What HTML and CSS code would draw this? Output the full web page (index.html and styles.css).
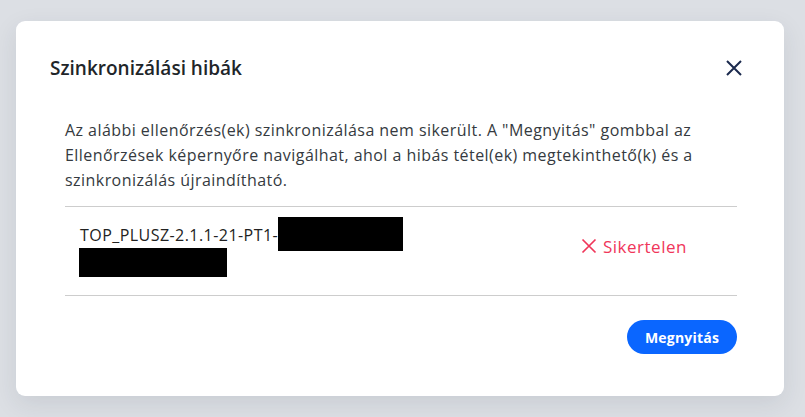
FILE: index.html
```html
<!DOCTYPE html>
<html lang="hu">
<head>
<meta charset="utf-8">
<title>Szinkronizálási hibák</title>
<link rel="stylesheet" href="styles.css">
</head>
<body>
<div class="modal">
  <div class="modal-header">
    <h2 class="modal-title">Szinkronizálási hibák</h2>
    <button class="close-btn" aria-label="Bezárás">
      <svg width="16" height="16" viewBox="0 0 16 16"><path d="M1 1 L15 15 M15 1 L1 15" stroke="#1b2a4e" stroke-width="2" fill="none"/></svg>
    </button>
  </div>
  <div class="modal-body">
    <p class="intro">Az alábbi ellenőrzés(ek) szinkronizálása nem sikerült. A "Megnyitás" gombbal az Ellenőrzések képernyőre navigálhat, ahol a hibás tétel(ek) megtekinthető(k) és a szinkronizálás újraindítható.</p>
    <div class="list">
      <div class="row">
        <div class="row-name">TOP_PLUSZ-2.1.1-21-PT1-<span class="redact redact-a"></span><span class="redact redact-b"></span></div>
        <div class="row-status">
          <svg width="16" height="16" viewBox="0 0 16 16"><path d="M1.5 1.5 L14.5 14.5 M14.5 1.5 L1.5 14.5" stroke="#f0365a" stroke-width="1.7" fill="none"/></svg>
          <span>Sikertelen</span>
        </div>
      </div>
    </div>
    <div class="actions">
      <button class="btn-primary">Megnyitás</button>
    </div>
  </div>
</div>
</body>
</html>
```

FILE: styles.css
```css
html, body {
  margin: 0;
  padding: 0;
}
body {
  background: #dcdfe4;
  font-family: "Open Sans", "Liberation Sans", sans-serif;
  width: 805px;
  height: 417px;
  overflow: hidden;
  padding: 21px 21px 0 16px;
  box-sizing: border-box;
}
.modal {
  background: #fff;
  border-radius: 9px;
  width: 768px;
  height: 375px;
  box-sizing: border-box;
  padding: 33px 0 0 0;
  box-shadow: 0 8px 24px rgba(40, 50, 70, 0.10);
}
.modal-header {
  display: flex;
  justify-content: space-between;
  align-items: center;
  padding: 0 42px 0 34px;
  height: 28px;
}
.modal-title {
  margin: 0;
  font-size: 19px;
  font-weight: 600;
  color: #212529;
  letter-spacing: 0;
}
.close-btn {
  border: 0;
  background: none;
  padding: 0;
  width: 16px;
  height: 16px;
  display: flex;
}
.modal-body {
  padding: 0 47px 0 49px;
}
.intro {
  margin: 36px 0 13px 0;
  font-size: 16px;
  line-height: 25px;
  color: #353a40;
  letter-spacing: 0.45px;
}
.list {
  border-top: 1px solid #cdcdcd;
  border-bottom: 1px solid #cdcdcd;
}
.row {
  display: grid;
  grid-template-columns: 1fr 156px;
  align-items: center;
  height: 88px;
}
.row-name {
  padding-left: 15px;
  padding-bottom: 5px;
  font-size: 16px;
  line-height: 30px;
  color: #222;
  letter-spacing: 0.45px;
}
.redact {
  display: inline-block;
  background: #000;
  vertical-align: middle;
}
.redact-a {
  width: 125px;
  height: 34px;
  margin-top: -4px;
}
.redact-b {
  display: block;
  width: 148px;
  height: 29px;
  margin-left: -1px;
  margin-top: -3px;
}
.row-status {
  display: flex;
  align-items: center;
  gap: 6px;
  color: #f0365a;
  font-size: 17px;
  letter-spacing: 0.5px;
  padding-bottom: 10px;
}
.actions {
  display: flex;
  justify-content: flex-end;
  padding-top: 24px;
}
.btn-primary {
  background: #0a66ff;
  color: #fff;
  border: 0;
  border-radius: 17px;
  width: 110px;
  height: 34px;
  font-family: "Open Sans", "Liberation Sans", sans-serif;
  font-weight: 700;
  font-size: 14px;
  letter-spacing: 0.2px;
}
```
